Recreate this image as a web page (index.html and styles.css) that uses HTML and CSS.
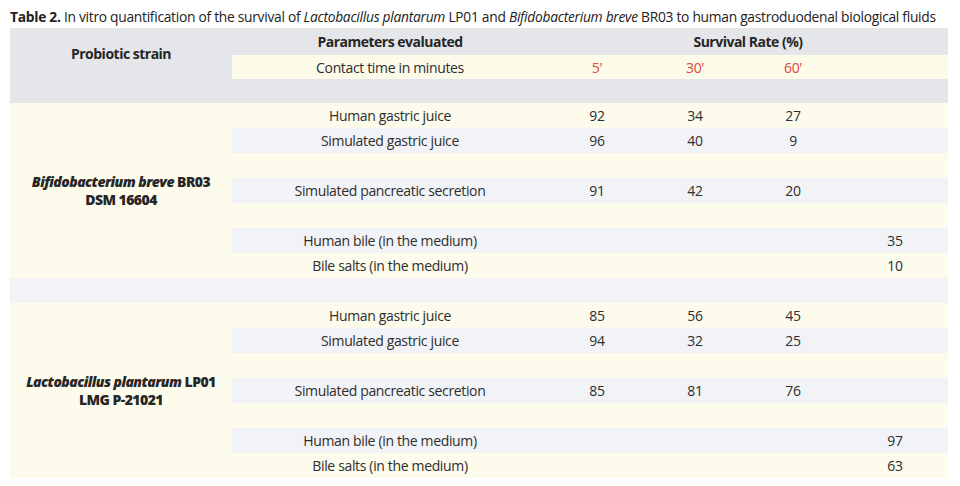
FILE: index.html
```html
<!DOCTYPE html>
<html lang="en">
<head>
<meta charset="utf-8">
<title>Table 2</title>
<link rel="stylesheet" href="styles.css">
</head>
<body>
<div class="page">
  <p class="caption"><b>Table 2.</b> In vitro quantification of the survival of <i>Lactobacillus plantarum</i> LP01 and <i>Bifidobacterium breve</i> BR03 to human gastroduodenal biological fluids</p>
  <table class="data">
    <colgroup>
      <col class="c-strain">
      <col class="c-param">
      <col class="c-n1">
      <col class="c-n2">
      <col class="c-n3">
      <col class="c-n4">
    </colgroup>
    <thead>
      <tr class="h1">
        <th rowspan="2" class="strain-h">Probiotic strain</th>
        <th>Parameters evaluated</th>
        <th colspan="4">Survival Rate (%)</th>
      </tr>
      <tr class="h2">
        <td>Contact time in minutes</td>
        <td class="red">5'</td>
        <td class="red">30'</td>
        <td class="red">60'</td>
        <td></td>
      </tr>
      <tr class="sep"><td colspan="6"></td></tr>
    </thead>
    <tbody>
      <tr class="cr">
        <td rowspan="7" class="strain"><b><i>Bifidobacterium breve</i> BR03<br>DSM 16604</b></td>
        <td>Human gastric juice</td><td>92</td><td>34</td><td>27</td><td></td>
      </tr>
      <tr class="gr"><td>Simulated gastric juice</td><td>96</td><td>40</td><td>9</td><td></td></tr>
      <tr class="cr"><td></td><td></td><td></td><td></td><td></td></tr>
      <tr class="gr"><td>Simulated pancreatic secretion</td><td>91</td><td>42</td><td>20</td><td></td></tr>
      <tr class="cr"><td></td><td></td><td></td><td></td><td></td></tr>
      <tr class="gr"><td>Human bile (in the medium)</td><td></td><td></td><td></td><td>35</td></tr>
      <tr class="cr"><td>Bile salts (in the medium)</td><td></td><td></td><td></td><td>10</td></tr>
      <tr class="sep2"><td colspan="6"></td></tr>
      <tr class="cr">
        <td rowspan="7" class="strain"><b><i>Lactobacillus plantarum</i> LP01<br>LMG P-21021</b></td>
        <td>Human gastric juice</td><td>85</td><td>56</td><td>45</td><td></td>
      </tr>
      <tr class="gr"><td>Simulated gastric juice</td><td>94</td><td>32</td><td>25</td><td></td></tr>
      <tr class="cr"><td></td><td></td><td></td><td></td><td></td></tr>
      <tr class="gr"><td>Simulated pancreatic secretion</td><td>85</td><td>81</td><td>76</td><td></td></tr>
      <tr class="cr"><td></td><td></td><td></td><td></td><td></td></tr>
      <tr class="gr"><td>Human bile (in the medium)</td><td></td><td></td><td></td><td>97</td></tr>
      <tr class="cr"><td>Bile salts (in the medium)</td><td></td><td></td><td></td><td>63</td></tr>
    </tbody>
  </table>
</div>
</body>
</html>
```
FILE: styles.css
```css
html, body {
  margin: 0;
  padding: 0;
  background: #ffffff;
}
body {
  font-family: "Open Sans", "Noto Sans", sans-serif;
  color: #2e2e2e;
  font-size: 14px;
}
.page {
  padding: 8px 12px 0 10px;
}
.caption {
  margin: 0 0 2px 0;
  height: 18px;
  line-height: 18px;
  font-size: 13.8px;
  color: #222222;
  white-space: nowrap;
  letter-spacing: -0.28px;
}
.caption b { font-weight: 700; }
.data {
  border-collapse: collapse;
  width: 938px;
  table-layout: fixed;
}
.c-strain { width: 222px; }
.c-param { width: 316px; }
.c-n1, .c-n2, .c-n3 { width: 98px; }
.c-n4 { width: 106px; }
.data th, .data td {
  padding: 0;
  height: 25px;
  text-align: center;
  vertical-align: middle;
  font-weight: 400;
  white-space: nowrap;
  letter-spacing: -0.35px;
}
.data th {
  font-weight: 700;
  color: #262626;
  letter-spacing: -0.5px;
}
.h1 th { background: #e5e6ea; height: 27px; }
.h2 td { background: #fcfbea; height: 24px; }
.sep td { background: #e5e6ea; height: 24px; }
.sep2 td { background: #f2f3f6; height: 25px; }
.cr td { background: #fcfbec; }
.gr td { background: #f2f3f6; }
.data td.strain {
  background: #fcfbec;
  font-weight: 700;
  line-height: 18px;
  color: #262626;
  letter-spacing: -0.55px;
}
.red { color: #e2473f; }
```
